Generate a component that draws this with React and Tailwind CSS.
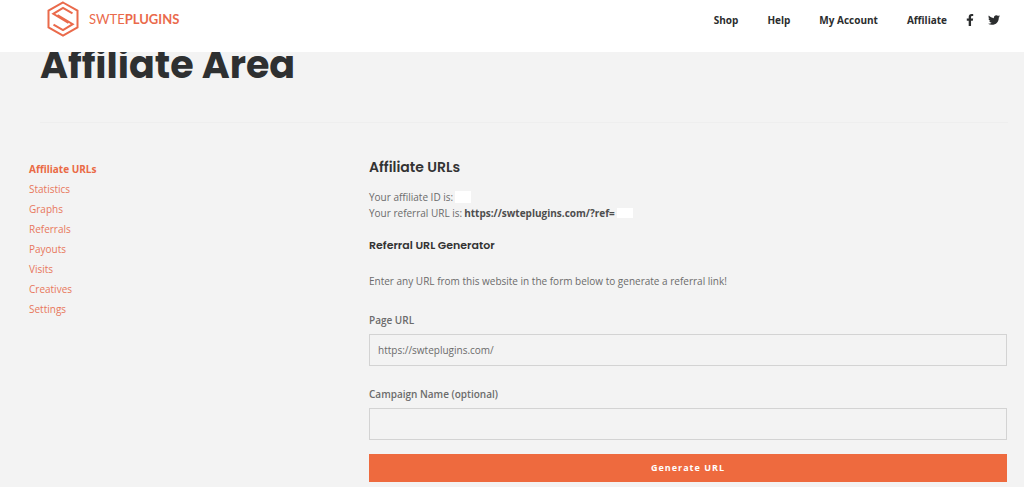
import { useState } from 'react';
import { FaFacebookF, FaTwitter } from 'react-icons/fa';

const menu = ['Shop', 'Help', 'My Account', 'Affiliate'];
const tabs = ['Affiliate URLs', 'Statistics', 'Graphs', 'Referrals', 'Payouts', 'Visits', 'Creatives', 'Settings'];

function Logo() {
    return (
        <a href="#" className="flex items-center gap-[10px] text-[#ea6a4b]">
            <svg viewBox="0 0 32 36" className="w-8 h-9" fill="none" stroke="currentColor" strokeWidth="2">
                <path d="M16 1.5 L30.5 9.7 V26.3 L16 34.5 L1.5 26.3 V9.7 Z" />
                <path d="M25.5 12.4 L16 6.8 L6.3 12.8 L21.5 22" />
                <path d="M6.5 23.6 L16 29.2 L25.7 23.2 L10.5 14" />
            </svg>
            <span className="font-['Lato',sans-serif] text-[13px] leading-5">SWTE<b className="font-bold">PLUGINS</b></span>
        </a>
    );
}

function Header() {
    return (
        <header className="sticky top-0 z-10 h-[52px] bg-white flex items-start justify-between pl-[47px] pr-6">
            <div className="pt-px">
                <Logo />
            </div>
            <nav className="flex items-center h-10 font-bold text-[#2b2d2e]">
                <div className="flex gap-[29px]">
                    {menu.map((item) => (
                        <a key={item} href="#">{item}</a>
                    ))}
                </div>
                <div className="flex items-center gap-3 ml-[17px]">
                    <a href="#" aria-label="Facebook"><FaFacebookF size={12} /></a>
                    <a href="#" aria-label="Twitter"><FaTwitter size={12} /></a>
                </div>
            </nav>
        </header>
    );
}

function Field({ id, label, value, onChange }) {
    return (
        <div className="flex flex-col gap-[6px]">
            <label htmlFor={id} className="font-semibold leading-4">{label}</label>
            <input
                id={id}
                type="text"
                value={value}
                onChange={(e) => onChange(e.target.value)}
                className="w-full h-8 px-2 border border-[#d3d3d3] bg-transparent outline-none"
            />
        </div>
    );
}

export default function App() {
    const [url, setUrl] = useState('https://swteplugins.com/');
    const [campaign, setCampaign] = useState('');

    return (
        <div className="min-h-screen bg-[#f3f3f3] font-['Open_Sans',sans-serif] text-[10px] leading-4 text-[#6b6b6b]">
            <Header />

            <main className="pb-[6px]">
                {/* Page title, scrolled partly under the header */}
                <div className="-mt-2 ml-10 mr-4 pb-9 border-b border-[#eeeeee]">
                    <h1 className="font-['Poppins','Inter',sans-serif] text-[38px] leading-[42px] font-bold text-[#2e3031]">Affiliate Area</h1>
                </div>

                <div className="flex pl-[29px] pr-[17px] pt-9">
                    <nav className="w-[340px] shrink-0 flex flex-col items-start leading-5 text-[#e8775b]">
                        {tabs.map((tab, i) => (
                            <a key={tab} href="#" className={i === 0 ? 'font-bold text-[#ea6a45]' : ''}>{tab}</a>
                        ))}
                    </nav>

                    <section className="grow">
                        <h2 className="font-['Poppins','Inter',sans-serif] text-[14px] leading-4 font-semibold text-[#333]">Affiliate URLs</h2>
                        <div className="mt-[14px]">
                            <p className="flex items-center gap-[2px]">
                                Your affiliate ID is: <span className="w-4 h-3 bg-white"></span>
                            </p>
                            <p className="flex items-center gap-[2px]">
                                Your referral URL is: <strong className="text-[#4d4d4d]">https://swteplugins.com/?ref=</strong>
                                <span className="w-4 h-[10px] bg-white"></span>
                            </p>
                        </div>

                        <h3 className="mt-4 font-['Poppins','Inter',sans-serif] text-[11px] leading-4 font-semibold text-[#333]">Referral URL Generator</h3>
                        <p className="mt-5">Enter any URL from this website in the form below to generate a referral link!</p>

                        <form className="mt-[23px]" onSubmit={(e) => e.preventDefault()}>
                            <div className="flex flex-col gap-5">
                                <Field id="page-url" label="Page URL" value={url} onChange={setUrl} />
                                <Field id="campaign" label="Campaign Name (optional)" value={campaign} onChange={setCampaign} />
                            </div>
                            <button type="submit" className="w-full h-7 mt-[14px] bg-[#ee6a3e] text-[9px] font-bold tracking-[1px] text-white">
                                Generate URL
                            </button>
                        </form>
                    </section>
                </div>
            </main>
        </div>
    );
}
